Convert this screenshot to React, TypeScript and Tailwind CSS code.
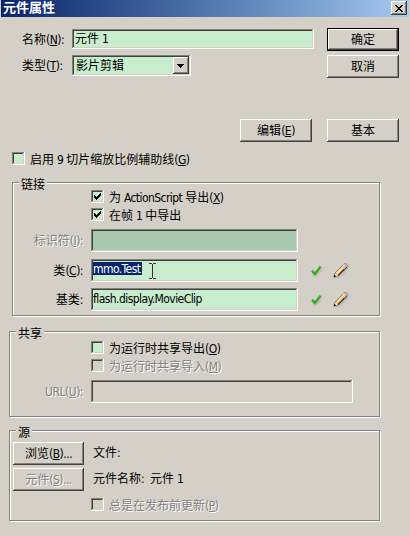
import React from "react";

const SUNKEN =
  "shadow-[inset_-1px_-1px_0_#fff,inset_1px_1px_0_#808080,inset_-2px_-2px_0_#d4d0c8,inset_2px_2px_0_#404040]";
const RAISED =
  "shadow-[inset_-1px_-1px_0_#404040,inset_1px_1px_0_#fff,inset_-2px_-2px_0_#808080]";

type TextProps = { children: string; disabled?: boolean; className?: string };

/* "&" marks the access key that follows it, as in a Windows resource string. */
function Text({ children, disabled, className = "" }: TextProps) {
  const runs = children.match(/&.|[\u3000-\u9fff]+|[^&\u3000-\u9fff]+/g) ?? [];
  return (
    <span
      className={`inline-block h-4 whitespace-pre leading-4 ${
        disabled ? "text-[#808080] [text-shadow:1px_1px_0_#fff]" : ""
      } ${className}`}
    >
      {runs.map((run, i) =>
        run[0] === "&" ? (
          <u key={i} className="tracking-[-0.5px] underline-offset-1">
            {run[1]}
          </u>
        ) : run.charCodeAt(0) > 0x2fff ? (
          run
        ) : (
          <span key={i} className={/[a-z]/.test(run) ? "tracking-[-0.56px]" : "tracking-[-0.5px]"}>
            {run}
          </span>
        )
      )}
    </span>
  );
}

function Button({ label, disabled, primary, className = "w-[72px]" }: { label: string; disabled?: boolean; primary?: boolean; className?: string }) {
  return (
    <button
      className={`flex h-[23px] shrink-0 items-center justify-center bg-[#d4d0c8] ${RAISED} ${className} ${
        primary ? "border border-black" : ""
      }`}
    >
      <Text disabled={disabled}>{label}</Text>
    </button>
  );
}

function Check({ label, checked, disabled }: { label: string; checked?: boolean; disabled?: boolean }) {
  return (
    <div className="flex h-[13px] items-center gap-[5px]">
      <span className={`block size-[13px] shrink-0 ${SUNKEN} ${disabled ? "bg-[#d4d0c8]" : "bg-[#c8edcc]"}`}>
        {checked && (
          <svg viewBox="0 0 13 13" className="size-[13px]" shapeRendering="crispEdges">
            <path d="M3 5h1v1h1v1h1v-1h1v-1h1v-1h1v-1h1v3h-1v1h-1v1h-1v1h-1v1h-1v-1h-1v-1h-1z" />
          </svg>
        )}
      </span>
      <Text disabled={disabled} className="mt-[2px]">
        {label}
      </Text>
    </div>
  );
}

function Group({ title, className, children }: { title: string; className: string; children: React.ReactNode }) {
  return (
    <section
      className={`border border-[#808080] shadow-[1px_1px_0_#fff,inset_1px_1px_0_#fff] ${className}`}
    >
      <div className="-mt-[7px] h-4 w-fit bg-[#d4d0c8] px-[2px]">
        <Text className="block">{title}</Text>
      </div>
      {children}
    </section>
  );
}

function Tick() {
  return (
    <svg viewBox="0 0 12 12" className="size-3 drop-shadow-[1px_1px_1px_#8888]">
      <path d="M1 5.8 3.8 9 9.6 1.6" fill="none" stroke="#2faa12" strokeWidth="2.1" />
    </svg>
  );
}

function Pencil() {
  return (
    <svg viewBox="0 0 16 17" className="h-[17px] w-4 drop-shadow-[1px_1px_1px_#8888]">
      <path d="M1.2 14.8 2.2 11 10.8 2.2Q12.4.9 13.6 2.1T13.7 4.8L5 13.6z" fill="#f5b04c" stroke="#77716b" strokeWidth=".9" />
      <path d="M3.2 10.8 9.4 4.5 10.6 5.6 4.4 12z" fill="#ffe7ae" />
      <path d="M5 13.7 13.8 4.9" stroke="#2c2825" strokeWidth="1.1" />
      <path d="m8.8 4.5 2.2-2.2 2.6 2.5-2.2 2.3z" fill="#c3c4c9" />
      <path d="m9.4 4 1.8-1.8.9.8-1.8 1.8z" fill="#f5f5f7" />
      <path d="M11.5 1.9q1.1-.8 2 .2t.1 2.2l-.6.6-2.1-2.2z" fill="#f3a0aa" />
      <path d="m2.4 11.1 2.5 2.5-2.9 1z" fill="#eae4d9" />
      <path d="m.5 15.6.9-2.8 1.9 1.8z" fill="#111" />
    </svg>
  );
}

function FieldRow({ label, className, disabled, children }: { label: string; className: string; disabled?: boolean; children: React.ReactNode }) {
  return (
    <div className={`flex h-[23px] items-center ${className}`}>
      <Text disabled={disabled} className="mr-2 flex-1 text-right">
        {label}
      </Text>
      {children}
    </div>
  );
}

function Status() {
  return (
    <div className="flex w-[81px] items-center pl-[13px]">
      <Tick />
      <div className="ml-[10px]">
        <Pencil />
      </div>
    </div>
  );
}

export default function App() {
  return (
    <main className="h-[536px] w-[410px] overflow-hidden bg-[#d4d0c8] text-[12px] text-black [font-family:'DejaVu_Sans_Condensed','Noto_Sans_CJK_SC',sans-serif]">
      <header className="mx-px flex h-[17px] items-start justify-between bg-linear-to-r from-[#0a246a] to-[#a6caf0] pl-[2px] pr-[2px]">
        <span className="text-[13px] font-bold leading-4 text-white">元件属性</span>
        <button className={`mt-px flex h-[14px] w-4 items-center justify-center bg-[#d4d0c8] ${RAISED}`}>
          <svg viewBox="0 0 8 7" className="mr-px h-[7px] w-2" shapeRendering="crispEdges">
            <path d="M0 0h2v1h1v1h2v-1h1v-1h2v1h-1v1h-1v1h-1v1h1v1h1v1h1v1h-2v-1h-1v-1h-2v1h-1v1h-2v-1h1v-1h1v-1h1v-1h-1v-1h-1v-1h-1z" />
          </svg>
        </button>
      </header>

      <div className="flex h-[102px] justify-between pr-[11px] pt-[11px]">
        <div className="w-[314px]">
          <div className="mt-px flex h-5 items-center">
            <Text className="mt-px w-[72px] pl-[22px]">名称(&N):</Text>
            <div className={`flex h-5 flex-1 items-center bg-[#c8edcc] pl-[3px] ${SUNKEN}`}>
              <Text>元件 1</Text>
            </div>
          </div>
          <div className="mt-[6px] flex h-[21px] items-center">
            <Text className="w-[72px] pl-[22px]">类型(&T):</Text>
            <div className={`flex h-[21px] w-[119px] items-center justify-between bg-[#c8edcc] pl-1 pr-[2px] ${SUNKEN}`}>
              <Text>影片剪辑</Text>
              <span className={`flex h-[17px] w-4 items-center justify-center bg-[#d4d0c8] ${RAISED}`}>
                <svg viewBox="0 0 7 4" className="mr-px h-1 w-[7px]" shapeRendering="crispEdges">
                  <path d="M0 0h7v1h-1v1h-1v1h-1v1h-1v-1h-1v-1h-1v-1h-1z" />
                </svg>
              </span>
            </div>
          </div>
        </div>
        <div className="flex flex-col gap-1">
          <Button label="确定" primary />
          <Button label="取消" />
        </div>
      </div>

      <div className="flex justify-end gap-[15px] pr-[11px]">
        <Button label="编辑(&E)" />
        <Button label="基本" />
      </div>

      <div className="mt-[10px] pl-3">
        <Check label="启用 9 切片缩放比例辅助线(&G)" />
      </div>

      <Group title="链接" className="ml-3 mt-[17px] h-[134px] w-[368px] pl-[6px]">
        <div className="-mt-[2px] flex flex-col gap-[5px] pl-[72px]">
          <Check label="为 ActionScript 导出(&X)" checked />
          <Check label="在帧 1 中导出" checked />
        </div>
        <FieldRow label="标识符(&I):" className="mt-2" disabled>
          <div className={`h-[23px] w-[207px] bg-[#a9c9af] ${SUNKEN}`} />
          <div className="w-[81px]" />
        </FieldRow>
        <FieldRow label="类(&C):" className="mt-[7px]">
          <div className={`relative h-[23px] w-[207px] bg-[#c8edcc] pl-[2px] pt-[3px] ${SUNKEN}`}>
            <div className="flex h-[13px] w-[49px] items-center bg-[#0a246a] text-white">
              <Text>mmo.Test</Text>
            </div>
            <svg viewBox="0 0 7 16" className="absolute left-[58px] top-1 h-4 w-[7px]" shapeRendering="crispEdges">
              <path d="M0 0h3v1h1v-1h3v1h-3v14h3v1h-3v-1h-1v1h-3v-1h3v-14h-3z" fill="#42283f" />
            </svg>
          </div>
          <Status />
        </FieldRow>
        <FieldRow label="基类:" className="mt-[6px]">
          <div className={`flex h-[23px] w-[207px] bg-[#c8edcc] pl-[2px] pt-[3px] ${SUNKEN}`}>
            <Text>flash.display.MovieClip</Text>
          </div>
          <Status />
        </FieldRow>
      </Group>

      <Group title="共享" className="ml-[9px] mt-[15px] h-[86px] w-[371px] pl-[6px]">
        <div className="flex flex-col gap-[5px] pl-[75px]">
          <Check label="为运行时共享导出(&O)" />
          <Check label="为运行时共享导入(&M)" disabled />
        </div>
        <FieldRow label="URL(&U):" className="mt-2" disabled>
          <div className={`h-[23px] w-[262px] bg-[#d4d0c8] ${SUNKEN}`} />
          <div className="w-[26px]" />
        </FieldRow>
      </Group>

      <Group title="源" className="ml-[9px] mt-[13px] h-[91px] w-[371px] pl-[6px]">
        <div className="-ml-[3px] mt-[2px] flex items-center gap-[9px]">
          <Button label="浏览(&B)..." className="w-[71px]" />
          <Text className="-mt-[2px]">文件:</Text>
        </div>
        <div className="-ml-[3px] mt-[3px] flex items-center gap-[9px]">
          <Button label="元件(&S)..." className="w-[71px]" disabled />
          <Text className="-mt-[2px]">元件名称:  元件 1</Text>
        </div>
        <div className="mt-[7px] pl-[75px]">
          <Check label="总是在发布前更新(&P)" disabled />
        </div>
      </Group>
    </main>
  );
}
